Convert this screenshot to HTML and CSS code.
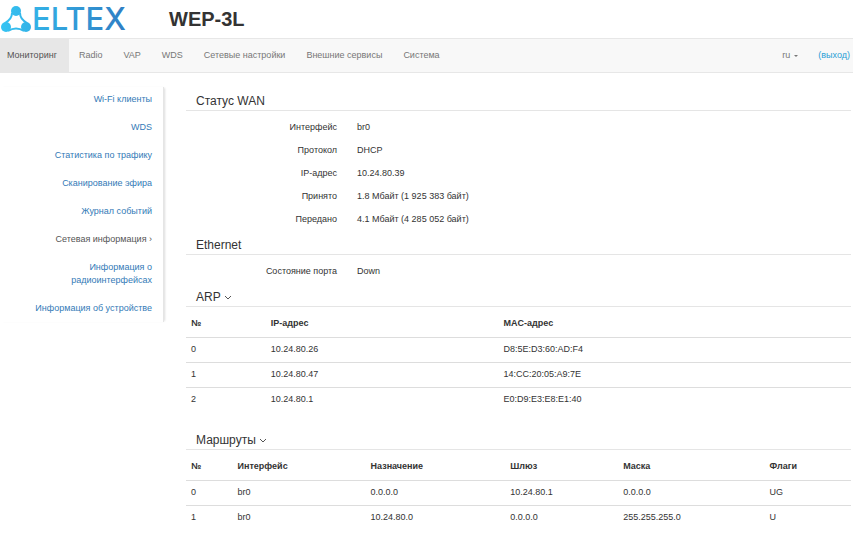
FILE: index.html
```
<!DOCTYPE html>
<html lang="ru">
<head>
    <meta charset="UTF-8">
    <meta name="viewport" content="width=device-width, initial-scale=1.0">
    <title>WEP-3L</title>
    <link rel="stylesheet" href="styles.css">
</head>
<body>
    <header class="header">
        <svg class="logo" width="132" height="36" viewBox="0 0 132 36" role="img" aria-label="ELTEX">
            <defs>
                <linearGradient id="brand" gradientUnits="userSpaceOnUse" x1="0" y1="0" x2="128" y2="0">
                    <stop offset="0" stop-color="#35c4f3" />
                    <stop offset="1" stop-color="#2f7dc3" />
                </linearGradient>
            </defs>
            <g fill="url(#brand)">
                <circle cx="16" cy="10" r="5" />
                <circle cx="6" cy="26" r="5" />
                <circle cx="26" cy="26" r="5" />
            </g>
            <path d="M12 12 Q12 18 5 22 M20 12 Q20 18 27 22 M8 30 Q16 25 24 30" fill="none" stroke="url(#brand)" stroke-width="2" />
            <text class="logo-text" x="32" y="29" fill="url(#brand)">ELTEX</text>
        </svg>
        <h1 class="device">WEP-3L</h1>
    </header>

    <nav class="navbar">
        <a class="nav-link active" href="#">Мониторинг</a>
        <a class="nav-link" href="#">Radio</a>
        <a class="nav-link" href="#">VAP</a>
        <a class="nav-link" href="#">WDS</a>
        <a class="nav-link" href="#">Сетевые настройки</a>
        <a class="nav-link" href="#">Внешние сервисы</a>
        <a class="nav-link" href="#">Система</a>
        <div class="nav-right">
            <button class="lang" type="button">ru <span class="caret"></span></button>
            <a class="logout" href="#">(выход)</a>
        </div>
    </nav>

    <div class="page">
        <aside class="sidebar">
            <a class="side-link" href="#">Wi-Fi клиенты</a>
            <a class="side-link" href="#">WDS</a>
            <a class="side-link" href="#">Статистика по трафику</a>
            <a class="side-link" href="#">Сканирование эфира</a>
            <a class="side-link" href="#">Журнал событий</a>
            <a class="side-link current" href="#">Сетевая информация ›</a>
            <a class="side-link" href="#">Информация о радиоинтерфейсах</a>
            <a class="side-link" href="#">Информация об устройстве</a>
        </aside>

        <main class="content">
            <h2 class="legend">Статус WAN</h2>
            <dl class="info">
                <dt>Интерфейс</dt><dd>br0</dd>
                <dt>Протокол</dt><dd>DHCP</dd>
                <dt>IP-адрес</dt><dd>10.24.80.39</dd>
                <dt>Принято</dt><dd>1.8 Мбайт (1 925 383 байт)</dd>
                <dt>Передано</dt><dd>4.1 Мбайт (4 285 052 байт)</dd>
            </dl>

            <h2 class="legend">Ethernet</h2>
            <dl class="info">
                <dt>Состояние порта</dt><dd>Down</dd>
            </dl>

            <h2 class="legend">ARP
                <svg class="chevron" width="8" height="5" viewBox="0 0 8 5"><path d="M1 1 L4 4 L7 1" /></svg>
            </h2>
            <table class="table arp">
                <thead>
                    <tr><th>№</th><th>IP-адрес</th><th>MAC-адрес</th></tr>
                </thead>
                <tbody>
                    <tr><td>0</td><td>10.24.80.26</td><td>D8:5E:D3:60:AD:F4</td></tr>
                    <tr><td>1</td><td>10.24.80.47</td><td>14:CC:20:05:A9:7E</td></tr>
                    <tr><td>2</td><td>10.24.80.1</td><td>E0:D9:E3:E8:E1:40</td></tr>
                </tbody>
            </table>

            <h2 class="legend">Маршруты
                <svg class="chevron" width="8" height="5" viewBox="0 0 8 5"><path d="M1 1 L4 4 L7 1" /></svg>
            </h2>
            <table class="table routes">
                <thead>
                    <tr><th>№</th><th>Интерфейс</th><th>Назначение</th><th>Шлюз</th><th>Маска</th><th>Флаги</th></tr>
                </thead>
                <tbody>
                    <tr><td>0</td><td>br0</td><td>0.0.0.0</td><td>10.24.80.1</td><td>0.0.0.0</td><td>UG</td></tr>
                    <tr><td>1</td><td>br0</td><td>10.24.80.0</td><td>0.0.0.0</td><td>255.255.255.0</td><td>U</td></tr>
                </tbody>
            </table>
        </main>
    </div>
</body>
</html>
```
FILE: styles.css
```
* {
    box-sizing: border-box;
}
body {
    margin: 0;
    font-family: "Liberation Sans", Arial, sans-serif;
    font-size: 9px;
    line-height: 13px;
    color: #333;
    background-color: #fff;
}
a {
    color: #337ab7;
    text-decoration: none;
}
.header {
    display: flex;
    align-items: center;
    gap: 37px;
    height: 38px;
}
.logo-text {
    font-family: Inter, sans-serif;
    font-size: 31px;
    font-weight: 500;
}
.device {
    margin: 0;
    font-size: 20px;
    line-height: 24px;
}
.navbar {
    display: flex;
    align-items: stretch;
    height: 35px;
    background-color: #f8f8f8;
    border-top: 1px solid #e7e7e7;
    border-bottom: 1px solid #e7e7e7;
}
.nav-link {
    padding: 10px 11px 10px 10px;
    color: #777;
}
.nav-link.active {
    padding-left: 7px;
    padding-right: 12px;
    color: #555;
    background-color: #e7e7e7;
}
.nav-right {
    display: flex;
    align-items: center;
    gap: 20px;
    margin-left: auto;
    padding-right: 3px;
}
.lang {
    display: flex;
    align-items: center;
    gap: 4px;
    padding: 0;
    border: 0;
    background: none;
    font: inherit;
    color: #777;
}
.caret {
    border-top: 2px solid #777;
    border-left: 2px solid transparent;
    border-right: 2px solid transparent;
}
.logout {
    color: #2a9fd6;
}
.page {
    display: flex;
    align-items: flex-start;
    gap: 22px;
    padding: 14px 2px 0 0;
}
.sidebar {
    display: flex;
    flex-direction: column;
    gap: 15px;
    flex: none;
    width: 164px;
    padding: 6px 11px 7px 24px;
    border-right: 1px solid #e5e5e5;
    box-shadow: 2px 0 2px -1px #ddd;
    text-align: right;
}
.side-link.current {
    color: #555;
}
.content {
    flex: 1;
}
.legend {
    margin: 0;
    padding: 6px 10px 1px;
    border-bottom: 1px solid #e5e5e5;
    font-size: 12px;
    font-weight: normal;
    line-height: 16px;
}
.chevron {
    vertical-align: middle;
    fill: none;
    stroke: #555;
}
.info {
    display: grid;
    grid-template-columns: 151px 1fr;
    gap: 10px 20px;
    margin: 0;
    padding: 10px 0 5px;
}
.info dt {
    text-align: right;
}
.info dd {
    margin: 0;
}
.table {
    width: 100%;
    table-layout: fixed;
    border-collapse: collapse;
}
.arp {
    margin-bottom: 14px;
}
.table th,
.table td {
    height: 25px;
    padding: 0 5px;
    text-align: left;
}
.table th {
    height: 30px;
    padding-top: 3px;
}
.table td {
    border-top: 1px solid #ddd;
}
.arp th:nth-child(1) { width: 12%; }
.arp th:nth-child(2) { width: 35%; }
.routes th:nth-child(1) { width: 7%; }
.routes th:nth-child(2) { width: 20%; }
.routes th:nth-child(3) { width: 21%; }
.routes th:nth-child(4) { width: 17%; }
.routes th:nth-child(5) { width: 22%; }
```
